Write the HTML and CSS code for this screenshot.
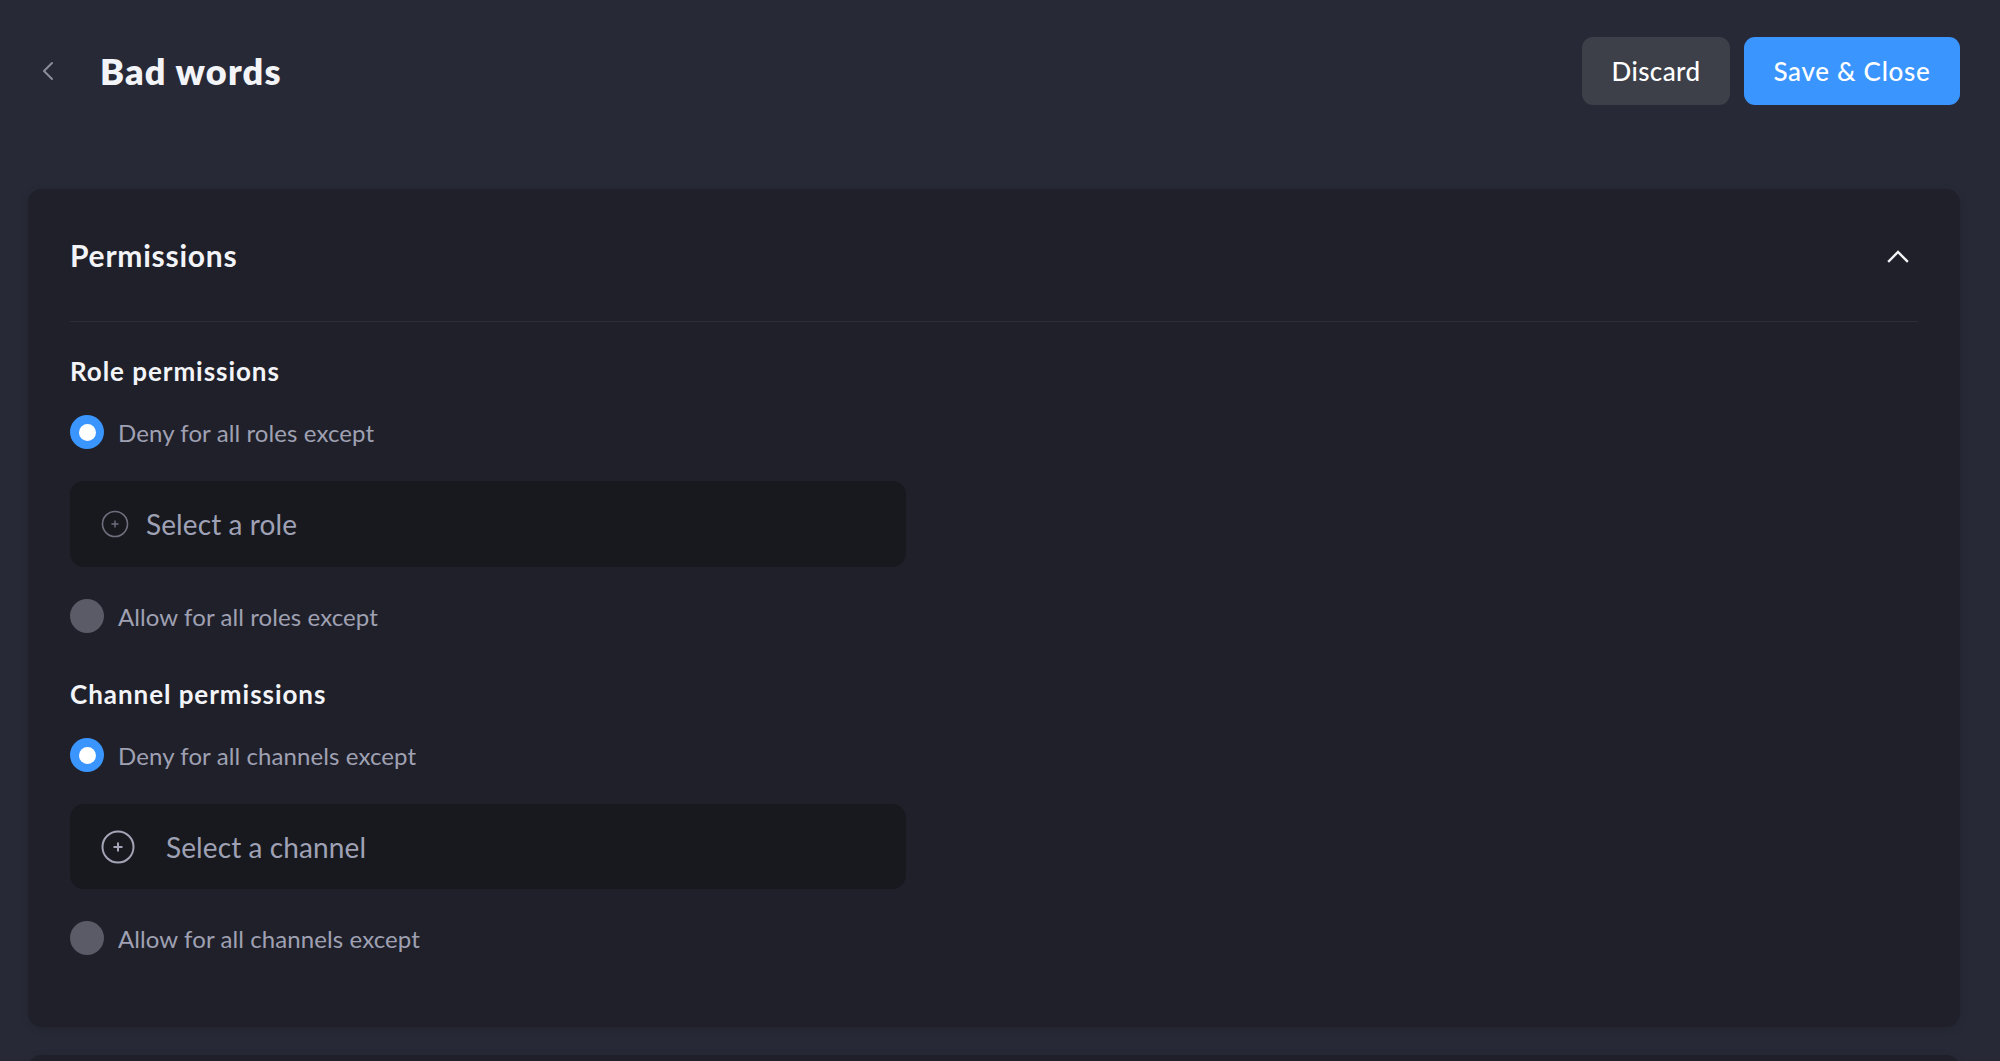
FILE: index.html
```html
<!DOCTYPE html>
<html lang="en">
<head>
<meta charset="utf-8">
<title>Bad words</title>
<link rel="stylesheet" href="styles.css">
</head>
<body>
<header class="topbar">
  <div class="title-group">
    <button class="back" aria-label="Back">
      <svg width="14" height="20" viewBox="0 0 14 20"><path d="M11 2 L3 10 L11 18" fill="none" stroke="#8b8d99" stroke-width="2" stroke-linecap="round" stroke-linejoin="round"/></svg>
    </button>
    <h1 class="title">Bad words</h1>
  </div>
  <div class="actions">
    <button class="btn btn-discard">Discard</button>
    <button class="btn btn-save">Save &amp; Close</button>
  </div>
</header>

<section class="card">
  <div class="card-head">
    <h2 class="card-title">Permissions</h2>
    <svg class="collapse" width="22" height="14" viewBox="0 0 22 14"><path d="M2 12 L11 3 L20 12" fill="none" stroke="#f3f4f8" stroke-width="2.4" stroke-linecap="square"/></svg>
  </div>
  <div class="card-body">
    <h3 class="group-title">Role permissions</h3>
    <label class="radio-row">
      <span class="radio radio-on"></span>
      <span class="radio-label">Deny for all roles except</span>
    </label>
    <div class="select select-role">
      <svg width="28" height="28" viewBox="0 0 28 28"><circle cx="14" cy="14" r="12.5" fill="none" stroke="#6d6f7c" stroke-width="1.6"/><path d="M14 10.5 V17.5 M10.5 14 H17.5" stroke="#6d6f7c" stroke-width="1.4"/></svg>
      <span class="select-text">Select a role</span>
    </div>
    <label class="radio-row">
      <span class="radio radio-off"></span>
      <span class="radio-label">Allow for all roles except</span>
    </label>

    <h3 class="group-title group-title-2">Channel permissions</h3>
    <label class="radio-row">
      <span class="radio radio-on"></span>
      <span class="radio-label">Deny for all channels except</span>
    </label>
    <div class="select select-channel">
      <svg width="34" height="34" viewBox="0 0 34 34"><circle cx="17" cy="17" r="15.5" fill="none" stroke="#a3a5b6" stroke-width="2"/><path d="M17 12.5 V21.5 M12.5 17 H21.5" stroke="#a3a5b6" stroke-width="2"/></svg>
      <span class="select-text">Select a channel</span>
    </div>
    <label class="radio-row">
      <span class="radio radio-off"></span>
      <span class="radio-label">Allow for all channels except</span>
    </label>
  </div>
</section>

<section class="card card-next"></section>
</body>
</html>
```

FILE: styles.css
```css
* { box-sizing: border-box; }

html, body {
  margin: 0;
  padding: 0;
}

body {
  background: #272936;
  font-family: Lato, "Open Sans", sans-serif;
  color: #f3f4f8;
  overflow: hidden;
}

button {
  font-family: inherit;
  border: none;
  cursor: pointer;
}

.topbar {
  display: flex;
  align-items: center;
  justify-content: space-between;
  height: 68px;
  margin-top: 37px;
  padding: 0 40px 0 41px;
}

.title-group {
  display: flex;
  align-items: center;
  gap: 45px;
}

.back {
  background: transparent;
  padding: 0;
  width: 14px;
  height: 20px;
  display: flex;
}

.title {
  margin: 0;
  font-size: 36px;
  font-weight: 800;
  letter-spacing: 1.2px;
  color: #f3f4f8;
  line-height: 1;
}

.actions {
  display: flex;
  gap: 14px;
}

.btn {
  height: 68px;
  border-radius: 11px;
  font-size: 26px;
  font-weight: 500;
  color: #ffffff;
  padding: 0;
  letter-spacing: 0.4px;
}

.btn-discard {
  width: 148px;
  background: #3d3f49;
}

.btn-save {
  width: 216px;
  background: #3a95ff;
  letter-spacing: 0.7px;
}

.card {
  margin: 84px 40px 0 28px;
  background: #1f2029;
  border-radius: 14px;
  padding: 0 42px 72px;
  box-shadow: 0 2px 8px rgba(0, 0, 0, 0.12);
}

.card-head {
  display: flex;
  align-items: center;
  justify-content: space-between;
  height: 133px;
  border-bottom: 1px solid #2b2d37;
}

.card-title {
  margin: 0;
  font-size: 30px;
  font-weight: 700;
  letter-spacing: 0.75px;
  color: #f3f4f8;
}

.collapse {
  margin-right: 9px;
  margin-top: 2px;
}

.card-body {
  display: flex;
  flex-direction: column;
  align-items: flex-start;
  padding-top: 33px;
}

.group-title {
  margin: 0;
  height: 32px;
  line-height: 32px;
  font-size: 26px;
  font-weight: 700;
  letter-spacing: 0.95px;
  color: #f3f4f8;
}

.group-title-2 {
  margin-top: 45px;
}

.radio-row {
  display: flex;
  align-items: center;
  gap: 14px;
  margin-top: 28px;
  height: 34px;
}

.group-title + .radio-row {
  margin-top: 28px;
}

.select + .radio-row {
  margin-top: 32px;
}

.radio {
  width: 34px;
  height: 34px;
  border-radius: 50%;
  flex: none;
}

.radio-on {
  background: #3a95ff;
  position: relative;
}

.radio-on::after {
  content: "";
  position: absolute;
  left: 8.5px;
  top: 8.5px;
  width: 17px;
  height: 17px;
  border-radius: 50%;
  background: #ffffff;
}

.radio-off {
  background: #5a5b66;
}

.radio-label {
  font-size: 24px;
  font-weight: 400;
  color: #9fa1b3;
  letter-spacing: 0.1px;
}

.select {
  display: flex;
  align-items: center;
  width: 836px;
  height: 86px;
  margin-top: 32px;
  background: #18191f;
  border-radius: 14px;
}

.select-role {
  padding-left: 31px;
  gap: 17px;
}

.select-channel {
  padding-left: 31px;
  gap: 31px;
  height: 85px;
}

.select-text {
  font-size: 28px;
  font-weight: 400;
  color: #9fa1b5;
  letter-spacing: 0.1px;
}

.card-next {
  margin-top: 28px;
  height: 120px;
  padding: 0;
}
```
